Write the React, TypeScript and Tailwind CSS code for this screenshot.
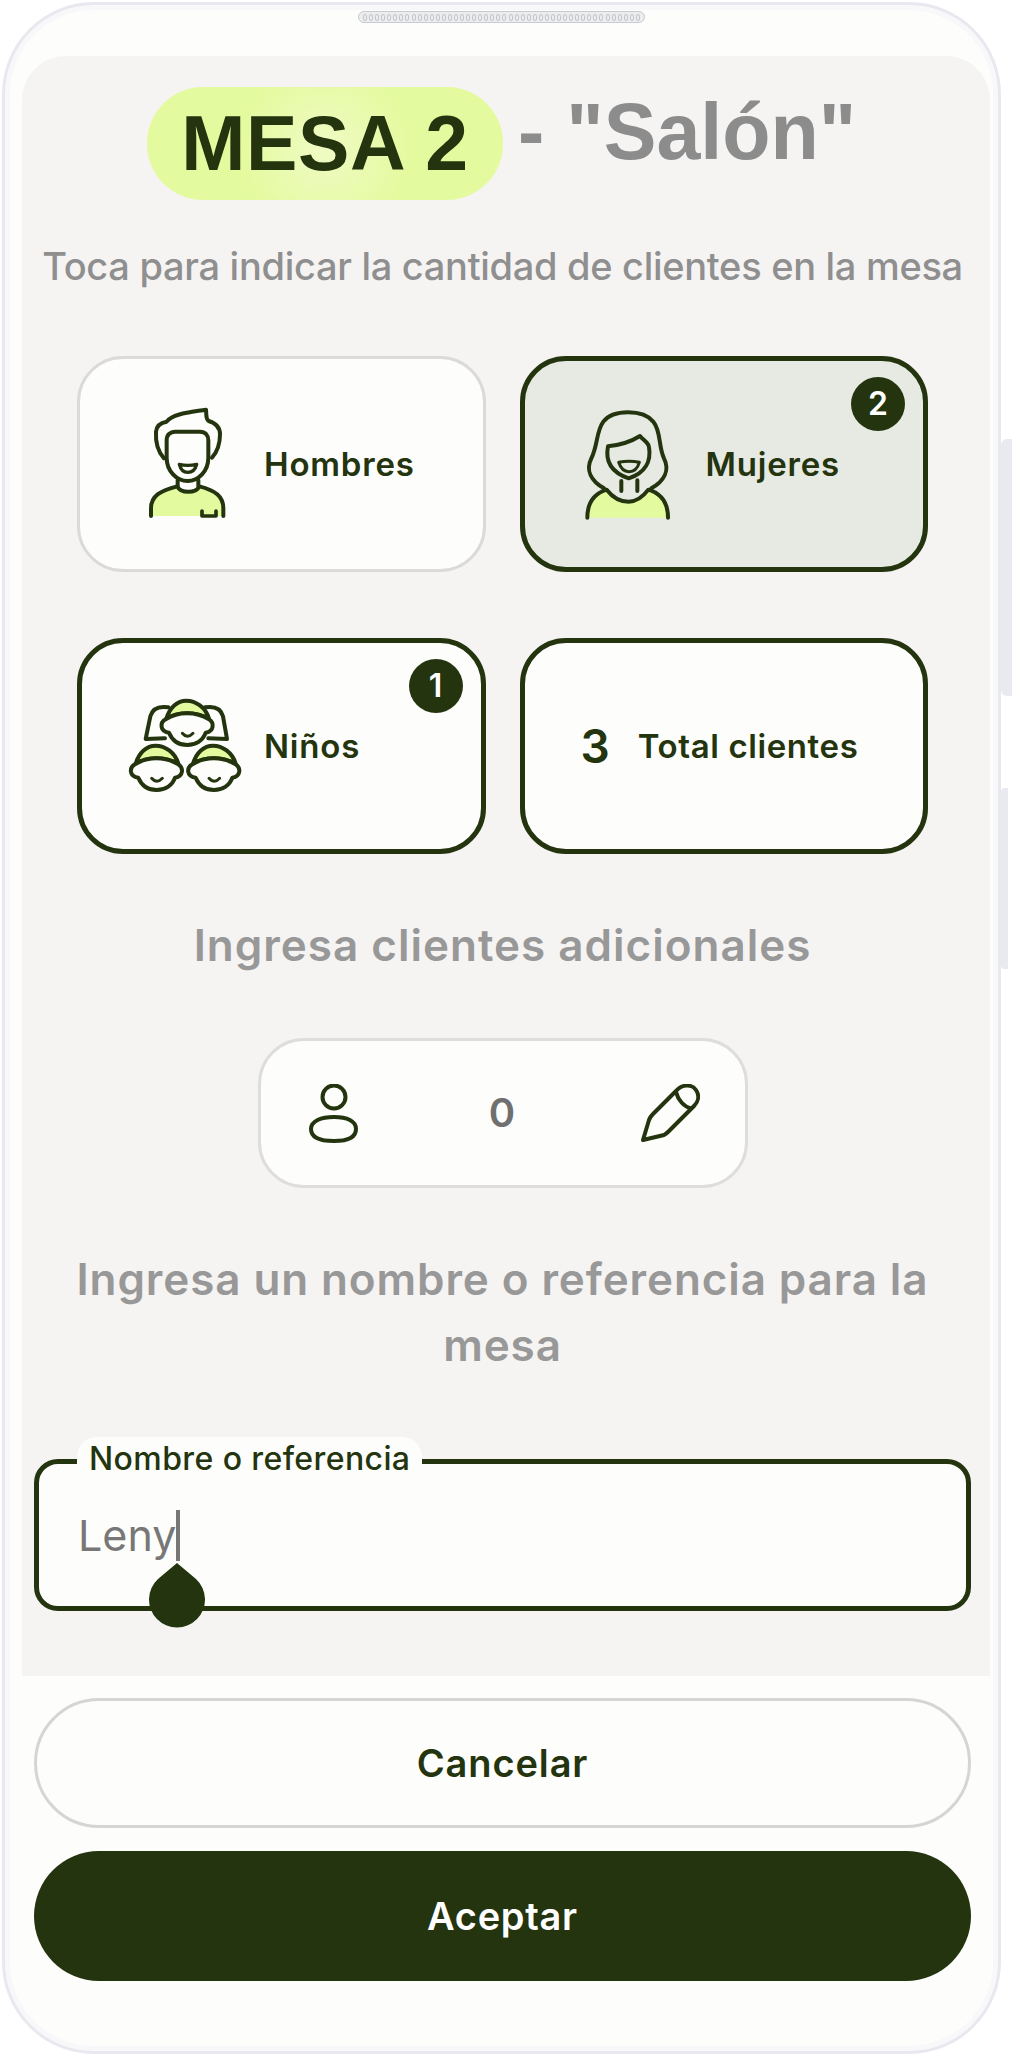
const DARK = '#23340e';

const ManIcon = () => (
  <svg width="95" height="125" viewBox="0 0 285 375" fill="none" stroke={DARK} strokeWidth="12" strokeLinecap="round" strokeLinejoin="round">
    <path d="M33 345V322C33 285 62 268 112 256C122 278 168 278 178 256C225 268 250 285 250 322V345Z" fill="#e4fa9f" stroke="none" />
    <path d="M33 345V322C33 285 62 268 112 256C122 278 168 278 178 256C225 268 250 285 250 322V345" />
    <path d="M72 172C52 150 46 125 48 92C50 72 62 65 80 62C98 38 150 34 198 26C200 42 196 52 206 60C226 66 240 78 240 100C240 130 234 150 216 170" />
    <path d="M80 170V118C80 102 90 92 106 92H180C196 92 205 102 205 118V170C205 210 175 240 143 240C110 240 80 210 80 170Z" />
    <path d="M113 238V256M175 238V256" />
    <path d="M118 190Q143 196 170 190Q164 214 143 214Q124 214 118 190Z" strokeWidth="10" />
    <path d="M186 330V345H228V330" strokeWidth="11" />
  </svg>
);

const WomanIcon = () => (
  <svg width="95" height="125" viewBox="0 0 285 375" fill="none" stroke={DARK} strokeWidth="12" strokeLinecap="round" strokeLinejoin="round">
    <path d="M22 350C22 305 42 278 80 266C100 292 125 302 146 302C170 302 190 286 205 266C245 278 264 308 264 350Z" fill="#e4fa9f" stroke="none" />
    <path d="M22 350C22 305 42 278 80 266C100 292 125 302 146 302C170 302 190 286 205 266C245 278 264 308 264 350" />
    <path d="M72 262C34 240 16 208 34 172C54 132 48 92 70 62C98 24 190 24 220 62C244 92 234 132 252 172C270 208 252 240 214 262" />
    <path d="M84 136C120 132 150 124 180 105C190 118 205 124 207 138C214 180 196 216 146 232C100 216 74 186 84 136Z" />
    <path d="M124 240V270M172 238V270" />
    <path d="M116 184Q148 178 178 184Q170 212 147 212Q125 212 116 184Z" strokeWidth="9" />
  </svg>
);

const KidHead = ({ x, y }: { x: number; y: number }) => (
  <g transform={`translate(${x} ${y})`}>
    <path d="M32 224C42 190 65 170 92 170C120 170 150 190 160 224C120 202 68 202 32 224Z" fill="#e4fa9f" />
    <path d="M30 226C12 236 12 262 40 266C50 290 70 303 95 303C120 303 142 290 150 266C176 262 176 236 160 226C120 202 68 202 30 226Z" fill="#fdfdfb" />
    <path d="M80 268Q95 286 112 268" strokeWidth="9" />
  </g>
);

const KidsIcon = () => (
  <svg width="125" height="115" viewBox="0 0 375 345" fill="none" stroke={DARK} strokeWidth="12" strokeLinecap="round" strokeLinejoin="round">
    <path d="M130 55C100 50 82 60 76 82L62 150L120 148" />
    <path d="M240 55C270 50 288 60 294 82L306 150L250 148" />
    <KidHead x={92} y={-135} />
    <KidHead x={0} y={0} />
    <KidHead x={172} y={0} />
  </svg>
);

const PersonIcon = () => (
  <svg width="49" height="59" viewBox="0 0 49 59" fill="none" stroke={DARK} strokeWidth="4">
    <circle cx="25" cy="13" r="11.5" />
    <path d="M2 45C2 37 12 33 25 33C38 33 47 37 47 45C47 54 38 57 25 57C12 57 2 54 2 45Z" />
  </svg>
);

const PencilIcon = () => (
  <svg width="60" height="59" viewBox="0 0 60 59" fill="none" stroke={DARK} strokeWidth="4" strokeLinejoin="round">
    <path d="M3 56L9 36C10 33 11 32 13 30L36 7C42 0 52 0 56 6C60 12 58 18 54 22L30 46C28 48 26 50 24 51Z" />
    <path d="M36 8C38 16 44 23 52 25" />
  </svg>
);

type CardProps = {
  label: string;
  icon?: React.ReactNode;
  badge?: number;
  selected?: boolean;
  active?: boolean;
  labelClass: string;
  iconClass: string;
};

const Card = ({ label, icon, badge, selected, active, labelClass, iconClass }: CardProps) => (
  <div
    className={`relative flex h-[216px] items-center rounded-[46px] ${active ? 'border-[5px] border-[#23340e]' : 'border-[3px] border-[#dbdad8]'} ${selected ? 'bg-[#e6eae3]' : 'bg-[#fdfdfb]'}`}
  >
    <div className={iconClass}>{icon}</div>
    <span className={`mt-[2px] text-[33px] font-semibold tracking-[0.8px] text-[#23340e] ${labelClass}`}>{label}</span>
    {badge !== undefined && (
      <span className="absolute right-[18px] top-[16px] flex h-[54px] w-[54px] items-center justify-center rounded-full bg-[#23340e] text-[32px] font-semibold text-white">
        {badge}
      </span>
    )}
  </div>
);

export default function App() {
  return (
    <div className="relative h-[2056px] w-[1012px] overflow-hidden bg-white py-[2px] pl-[2px] pr-[11px] font-['Inter',sans-serif]">
      <div className="absolute right-0 top-[439px] h-[257px] w-[11px] rounded-l-[6px] bg-[#e9eaf0]" />
      <div className="absolute right-[4px] top-[788px] h-[181px] w-[7px] rounded-l-[4px] bg-[#e9eaf0]" />

      <div className="relative h-full rounded-[92px] border-[3px] border-[#e8e9ee] bg-[#fdfdfc] pl-[17px] pr-[8px] pt-[51px] shadow-[inset_0_0_0_5px_#f8f8fa]">
        <div className="absolute left-[353px] top-[6px] flex h-[12px] w-[287px] items-center justify-between rounded-full border border-[#c9cad3] bg-[#eceded] px-[4px]">
          {Array.from({ length: 46 }).map((_, i) => (
            <span key={i} className="h-[7px] w-[4px] rounded-full border border-[#c3c4cc]" />
          ))}
        </div>

        <div className="rounded-t-[44px] bg-[#f5f4f3] pb-[65px] pl-[12px] pr-[19px] pt-[31px]">
          <div className="flex items-start pl-[113px] font-['Liberation_Sans',sans-serif]">
            <div className="flex h-[113px] w-[356px] items-center justify-center rounded-[56px] bg-[radial-gradient(circle_at_50%_55%,#f0fbc4_0%,#e4fa9f_45%)] text-[77px] font-bold leading-none tracking-[0.6px] text-[#23340e]">
              MESA 2
            </div>
            <div className="ml-[15px] mt-[5px] text-[79px] font-bold leading-none text-[#8c8c8c]">- "Salón"</div>
          </div>

          <p className="mt-[41px] whitespace-nowrap text-center text-[38px] font-medium leading-[50px] tracking-[-0.3px] text-[#8f8f8f]">
            Toca para indicar la cantidad de clientes en la mesa
          </p>

          <div className="mx-auto mt-[65px] grid w-[851px] grid-cols-2 gap-x-[34px] gap-y-[66px]">
            <Card label="Hombres" icon={<ManIcon />} iconClass="ml-[60px] mb-[2px] w-[95px]" labelClass="ml-[29px]" />
            <Card label="Mujeres" icon={<WomanIcon />} selected active badge={2} iconClass="ml-[55px] mb-[2px] w-[95px]" labelClass="ml-[31px]" />
            <Card label="Niños" icon={<KidsIcon />} active badge={1} iconClass="ml-[43px] w-[125px]" labelClass="ml-[14px]" />
            <div className="flex h-[216px] items-center rounded-[46px] border-[5px] border-[#23340e] bg-[#fdfdfb] pl-[56px]">
              <span className="text-[46px] font-semibold leading-none text-[#23340e]">3</span>
              <span className="ml-[28px] mt-[2px] text-[33px] font-semibold tracking-[0.6px] text-[#23340e]">Total clientes</span>
            </div>
          </div>

          <h2 className="mt-[61px] text-center text-[44px] font-semibold leading-[60px] tracking-[1px] text-[#989898]">Ingresa clientes adicionales</h2>

          <div className="mx-auto mt-[63px] flex h-[150px] w-[490px] items-center justify-between rounded-[46px] border-[3px] border-[#dedddb] bg-[#fdfdfb] pl-[48px] pr-[44px]">
            <PersonIcon />
            <span className="ml-[6px] text-[40px] font-semibold text-[#707070]">0</span>
            <PencilIcon />
          </div>

          <h2 className="mt-[58px] text-center text-[44px] font-semibold leading-[66px] tracking-[0.9px] text-[#989898]">
            Ingresa un nombre o referencia para la
            <br />
            mesa
          </h2>

          <div className="relative mt-[81px] flex h-[152px] items-center rounded-[24px] border-[5px] border-[#23340e] bg-[#fdfdfb] pl-[39px]">
            <div className="absolute left-[38px] top-[-27px] rounded-t-[20px] bg-[#fdfdfb] px-[12px] text-[32px] font-medium leading-[44px] tracking-[0.4px] text-[#23340e]">
              Nombre o referencia
            </div>
            <span className="text-[43px] text-[#777777]">Leny</span>
            <span className="h-[51px] w-[4px] bg-[#777777]" />
            <svg className="absolute left-[108px] top-[97px]" width="60" height="68" viewBox="0 0 60 68">
              <path d="M30 2L49 18A28 28 0 1 1 11 18Z" fill="#23340e" />
            </svg>
          </div>
        </div>

        <div className="pl-[12px] pr-[19px] pt-[22px]">
          <div className="flex h-[130px] items-center justify-center rounded-[65px] border-[3px] border-[#d6d5d3] bg-[#fdfdfb] text-[38px] font-semibold tracking-[0.9px] text-[#23340e]">
            Cancelar
          </div>
          <div className="mt-[23px] flex h-[130px] items-center justify-center rounded-[65px] bg-[#23340e] text-[38px] font-semibold tracking-[0.7px] text-white">
            Aceptar
          </div>
        </div>
      </div>
    </div>
  );
}
